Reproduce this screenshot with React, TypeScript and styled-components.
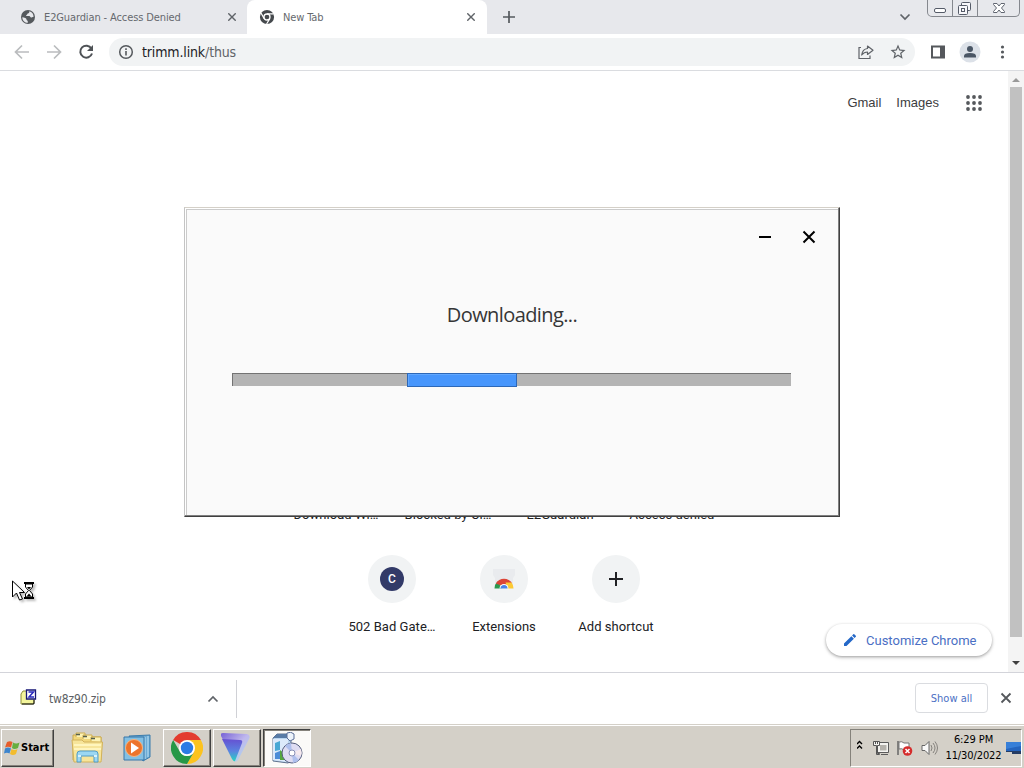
import React from 'react'
import styled, { createGlobalStyle, css } from 'styled-components'

const tahoma = `'DejaVu Sans Condensed', 'DejaVu Sans', sans-serif`

const GlobalStyle = createGlobalStyle`
  * {
    box-sizing: border-box;
  }

  body {
    margin: 0;
    overflow: hidden;
    background: #fff;
  }

  svg {
    display: block;
    flex-shrink: 0;
  }
`

const Screen = styled.div`
  position: relative;
  display: flex;
  flex-direction: column;
  width: 1024px;
  height: 768px;
  overflow: hidden;
  background: #fff;
  color: #202124;
  font-family: Roboto, sans-serif;
  font-size: 13px;
`

const Text = styled.span`
  white-space: nowrap;
`

/* ---------- browser frame ---------- */

const TabStrip = styled.div`
  display: flex;
  height: 34px;
  background: #e7e8ec;
`

const Tab = styled.div<{ $active?: boolean }>`
  display: flex;
  align-items: center;
  width: ${({ $active }) => ($active ? 240 : 247)}px;
  padding: 0 ${({ $active }) => ($active ? 12 : 11)}px 0 ${({ $active }) => ($active ? 12 : 20)}px;
  background: ${({ $active }) => ($active ? '#fff' : 'transparent')};
  border-radius: 8px 8px 0 0;
  color: #66696e;
  font-family: ${tahoma};
  font-size: 11px;
`

const TabTitle = styled(Text)`
  flex: 1;
  margin-left: 8px;
  letter-spacing: -0.12px;
`

const NewTabButton = styled.div`
  display: flex;
  align-items: center;
  padding-left: 16px;
  flex: 1;
`

const TabSearch = styled.div`
  display: flex;
  align-items: center;
  margin-right: 16px;
`

const WindowButtons = styled.div`
  display: flex;
  height: 17px;
  width: 93px;
  margin-right: 4px;
  border: 1px solid #85888e;
  border-top: none;
  border-radius: 0 0 5px 5px;
`

const WindowButton = styled.div<{ $width: number }>`
  display: flex;
  justify-content: center;
  width: ${({ $width }) => $width}px;

  & + & {
    border-left: 1px solid #85888e;
  }
`

const Toolbar = styled.div`
  display: flex;
  align-items: center;
  height: 37px;
  padding: 0 12px 0 13px;
  border-bottom: 1px solid #dadce0;
`

const NavButtons = styled.div`
  display: flex;
  gap: 14px;
  margin-right: 14px;
`

const Omnibox = styled.div`
  display: flex;
  align-items: center;
  width: 806px;
  height: 28px;
  padding: 0 8px 0 9px;
  border-radius: 14px;
  background: #f1f3f4;
`

const Address = styled(Text)`
  flex: 1;
  margin-left: 8px;
  font-family: ${tahoma};
  font-size: 14px;
  letter-spacing: -0.14px;
  color: #202124;

  span {
    color: #5f6368;
  }
`

const OmniboxActions = styled.div`
  display: flex;
  gap: 14px;
`

const ToolbarActions = styled.div`
  display: flex;
  align-items: center;
  justify-content: space-between;
  flex: 1;
  padding-left: 15px;
`

/* ---------- new tab page ---------- */

const Viewport = styled.div`
  display: flex;
  height: 601px;
`

const Page = styled.div`
  display: flex;
  flex-direction: column;
  flex: 1;
`

const PageLinks = styled.div`
  display: flex;
  flex-shrink: 0;
  align-items: center;
  justify-content: flex-end;
  height: 64px;
  padding-right: 26px;
  font-family: 'Liberation Sans', Arial, sans-serif;
  font-size: 13px;
  color: #3c3d40;

  svg {
    margin-left: 27px;
  }
`

const PageLink = styled(Text)`
  margin: -2px 0 0 15px;
`

const Shortcuts = styled.div`
  display: flex;
  flex-shrink: 0;
  flex-wrap: wrap;
  justify-content: center;
  row-gap: 14px;
  width: 448px;
  margin: 292px auto 0;
`

const Shortcut = styled.div`
  display: flex;
  flex-direction: column;
  align-items: center;
  width: 112px;
  height: 98px;
  padding-top: 16px;
`

const ShortcutIcon = styled.div`
  display: flex;
  align-items: center;
  justify-content: center;
  width: 48px;
  height: 48px;
  margin-bottom: 14px;
  border-radius: 50%;
  background: #f1f3f4;
`

const ShortcutLabel = styled(Text)`
  height: 20px;
  line-height: 20px;
  font-size: 13px;
  letter-spacing: 0.04px;
`

const Letter = styled.div`
  width: 24px;
  height: 24px;
  border-radius: 50%;
  background: #323a68;
  color: #fff;
  font: 500 12px/24px Roboto, sans-serif;
  text-align: center;
`

const CustomizeButton = styled.div`
  display: flex;
  flex-shrink: 0;
  align-items: center;
  align-self: flex-end;
  width: 166px;
  height: 32px;
  margin: -13px 16px 16px 0;
  padding-left: 16px;
  border-radius: 16px;
  box-shadow: 0 1px 3px rgba(0, 0, 0, 0.3), 0 2px 4px rgba(0, 0, 0, 0.1);
  color: #4a6fc4;

  svg {
    margin-right: 8px;
  }
`

const Scrollbar = styled.div`
  display: flex;
  flex-direction: column;
  align-items: center;
  width: 16px;
  background: #f4f4f4;
`

const ScrollThumb = styled.div`
  width: 12px;
  height: 550px;
  background: #c1c1c1;
`

/* ---------- download shelf ---------- */

const Shelf = styled.div`
  display: flex;
  align-items: center;
  height: 52px;
  padding: 0 12px 0 20px;
  border-top: 1px solid #d3d4da;
  font-family: ${tahoma};
`

const DownloadItem = styled.div`
  display: flex;
  align-items: center;
  justify-content: space-between;
  width: 217px;
  height: 38px;
  padding-right: 17px;
  border-right: 1px solid #d0d1d6;

  > svg:first-child {
    margin-top: -4px;
  }
`

const FileName = styled(Text)`
  flex: 1;
  margin-left: 12px;
  font-size: 12px;
  letter-spacing: -0.15px;
  color: #5c5f63;
`

const ShowAll = styled.div`
  width: 73px;
  height: 30px;
  margin: -1px 12px 0 auto;
  border: 1px solid #dadce0;
  border-radius: 4px;
  color: #4c70c4;
  font-size: 11px;
  line-height: 29px;
  text-align: center;
`

/* ---------- taskbar ---------- */

const Taskbar = styled.div`
  display: flex;
  align-items: center;
  height: 44px;
  padding: 3px 2px 1px 1px;
  border-top: 1px solid #d4d0c8;
  box-shadow: inset 0 1px #fff;
  background: #d4d0c8;
`

const raised = css`
  border: 1px solid;
  border-color: #fff #404040 #404040 #fff;
  box-shadow: inset -1px -1px #85827b;
`

const StartButton = styled.div`
  ${raised}
  display: flex;
  align-items: center;
  width: 53px;
  height: 38px;
  padding-left: 2px;
  color: #000;
  font: bold 11px ${tahoma};

  svg {
    margin-right: 1px;
  }
`

const QuickLaunch = styled.div`
  display: flex;
  align-items: center;
  gap: 19px;
  width: 109px;
  padding-left: 17px;
`

const TaskButton = styled.div<{ $pressed?: boolean }>`
  ${raised}
  display: flex;
  align-items: center;
  justify-content: center;
  width: 48px;
  height: 38px;
  margin-right: 2px;

  ${({ $pressed }) => $pressed && css`
    padding-right: 2px;
    background: #fbfaf8;
    border-color: #404040 #fff #fff #404040;
    box-shadow: inset 1px 1px #85827b;
  `}
`

const Tray = styled.div`
  display: flex;
  align-items: center;
  width: 172px;
  height: 38px;
  margin-left: auto;
  padding-left: 6px;
  border: 1px solid;
  border-color: #85827b #fff #fff #85827b;
`

const TrayIcons = styled.div`
  display: flex;
  align-items: center;
  gap: 6.500px;
  width: 84px;
`

const Clock = styled.div`
  width: 65px;
  color: #000;
  font: 11px/16px ${tahoma};
  letter-spacing: -0.1px;
  text-align: center;
  white-space: nowrap;
`

/* ---------- floating installer window ---------- */

const Installer = styled.div`
  position: absolute;
  left: 184px;
  top: 207px;
  display: flex;
  flex-direction: column;
  align-items: center;
  width: 656px;
  height: 310px;
  padding-right: 1px;
  background: #fafafa;
  border: 1px solid;
  border-color: #d4d0c8 #404040 #404040 #c4c4c4;
  box-shadow: inset -1px -1px #808080, inset 1px 1px #fff, inset 2px 2px #cbcbcb;
`

const InstallerButtons = styled.div`
  display: flex;
  align-self: flex-end;
  gap: 30px;
  margin: 22px 22px 0 0;
`

const InstallerStatus = styled.div`
  height: 30px;
  margin-top: 56px;
  padding-left: 1px;
  font: 20px/30px 'Open Sans', 'Noto Sans', sans-serif;
  letter-spacing: -0.6px;
  color: #363636;
  white-space: nowrap;
`

const ProgressTrack = styled.div`
  display: flex;
  align-self: flex-start;
  width: 559px;
  height: 13px;
  margin: 43px 0 0 47px;
  padding-left: 174px;
  background: #b4b4b4;
  border-top: 1px solid #737373;
  border-left: 1px solid #737373;
`

const ProgressChunk = styled.div`
  width: 110px;
  height: 14px;
  margin-top: -1px;
  background: #4796fc;
  border: 1px solid #2d68b8;
  box-shadow: inset 1px 1px #62a8ff;
`

const Cursor = styled.div`
  position: absolute;
  left: 12px;
  top: 580px;
  filter: drop-shadow(2px 2px 1px rgba(0, 0, 0, 0.25));
`

const CloseIcon = ({ size = 8, color = '#5f6368', weight = 1.4 }) => (
  <svg width={size} height={size} viewBox="0 0 8 8" stroke={color} strokeWidth={weight}>
    <path d="M.3.3l7.4 7.4M7.7.3L.3 7.7" />
  </svg>
)

const GlobeIcon = () => (
  <svg width="16" height="16" viewBox="0 0 16 16">
    <circle cx="8" cy="8" r="7" fill="#55595d" />
    <path d="M2.3 8.2c2 .2 4.200.8 4.200 2.200 0 1 1.300.9 1.300 2v1.400C4.800 13.800 2.300 11.600 2.300 8.200zM9.200 2.300c.4 1.500-.3 2-1.400 2.200-.7.2-.3 1.200-1.200 1.400-.8.2-.6 1 .1 1.100h2.500c1.200 0 .9 1.400 2 1.400.9 0 1.200-.6 2.300-.5C13.800 5.200 12 2.900 9.200 2.300z" fill="#e7e8ec" />
  </svg>
)

const ChromeMonoIcon = () => (
  <svg width="16" height="16" viewBox="0 0 16 16" fill="none">
    <circle cx="8" cy="8" r="5.100" stroke="#45494d" strokeWidth="4" />
    <circle cx="8" cy="8" r="3" fill="#45494d" stroke="#fff" strokeWidth="1.300" />
    <path d="M8 4.800h6.600M5.200 9.600L2 4M10.800 9.600L7.600 15" stroke="#fff" strokeWidth="1.200" />
  </svg>
)

const ChromeIcon = () => (
  <svg width="32" height="32" viewBox="0 0 32 32">
    <path d="M16 16L2.140 8A16 16 0 0 1 29.860 8z" fill="#e33b2e" />
    <path d="M16 8h13.860A16 16 0 0 1 16 32l6.930-12z" fill="#fcc31e" />
    <path d="M2.140 8L9.070 20A8 8 0 0 0 22.930 20L16 32A16 16 0 0 1 2.140 8z" fill="#279847" />
    <circle cx="16" cy="16" r="8" fill="#fff" />
    <circle cx="16" cy="16" r="6.200" fill="#2c7be5" />
  </svg>
)

const ExtensionsIcon = () => (
  <svg width="24" height="24" viewBox="0 0 24 24">
    <path d="M1 2h22v6l-2 3v9H3v-9L1 8z" fill="#e9ebee" />
    <path d="M2.500 21.500a9.500 9.500 0 0 1 3-7l4 5v2z" fill="#2c9950" />
    <path d="M3.800 16.500a9.500 9.500 0 0 1 16.400 0l-6 2h-5z" fill="#dc4437" />
    <path d="M21.500 21.500a9.500 9.500 0 0 0-2-6h-6l2 6z" fill="#fcc934" />
    <path d="M7.500 21.500a4.500 4.500 0 0 1 9 0z" fill="#fff" />
    <path d="M8.500 21.500a3.500 3.500 0 0 1 7 0z" fill="#4a82e8" />
  </svg>
)

const FolderIcon = () => (
  <svg width="33" height="32" viewBox="0 0 33 32">
    <path d="M2 6V3h8l2 2h18v23H2z" fill="#f2d87c" stroke="#c9a84c" />
    <path d="M5 5V1h9v4M12 7V3h9v4M20 9V5h10v5" fill="#fdf3b5" stroke="#cfae50" />
    <path d="M5 2.500h4M12 4.500h4M20 6.500h4" stroke="#555f4d" strokeWidth="1.500" />
    <path d="M1 8h10l2 2h18.500L30 30H3z" fill="#f7e59a" stroke="#d2b25a" />
    <path d="M3 13h27M3 17h27" stroke="#fff5bd" strokeWidth="2" />
    <path d="M6 30V22q0-3 3-3h15q3 0 3 3v8h-4v-6H10v6z" fill="#9bd7f2" stroke="#529cc6" />
    <path d="M7 24h3M23 24h3" stroke="#d9f2fc" strokeWidth="2" />
  </svg>
)

const MediaIcon = () => (
  <svg width="28" height="28" viewBox="0 0 28 28">
    <path d="M6 2l21-1v22l-7 4z" fill="#6eacd5" stroke="#3b7cac" />
    <path d="M22 3v22M25 2v21" stroke="#bce0f4" />
    <path d="M1 3h20v23H1z" fill="#83c0e3" stroke="#3977a9" />
    <circle cx="11" cy="14" r="8.500" fill="#ed742b" stroke="#f6b481" />
    <path d="M8 8.500v11l8-5.500z" fill="#fff" />
  </svg>
)

const VpnIcon = () => (
  <svg width="32" height="32" viewBox="0 0 32 32">
    <defs>
      <linearGradient id="vpn" x1="0" y1="0" x2="0" y2="1">
        <stop offset="0" stopColor="#6650d2" />
        <stop offset=".55" stopColor="#5a83e0" />
        <stop offset="1" stopColor="#24d5c1" />
      </linearGradient>
      <linearGradient id="vpnEdge" x1="0" y1="0" x2="1" y2="1">
        <stop offset="0" stopColor="#7661d6" />
        <stop offset=".5" stopColor="#c0b8ed" />
        <stop offset="1" stopColor="#a5dfec" />
      </linearGradient>
    </defs>
    <path d="M0 4q-1-3 2-3l24 1q4 1 2 5L17 28q-3 4-5-1z" fill="url(#vpnEdge)" />
    <path d="M1 7l18 1q3 0 2 3l-7 18q-1 1-3-2z" fill="url(#vpn)" />
  </svg>
)

const InstallerIcon = () => (
  <svg width="33" height="32" viewBox="0 0 33 32">
    <path d="M3 6L7 2h16l-2 5v22l-3 2L3 29z" fill="#b9d5ef" stroke="#61738f" />
    <path d="M3 6h16l3-4H7z" fill="#587ba6" />
    <path d="M17 1q4-2 7 1v5l-4 2-3-3z" fill="#edf3fb" stroke="#5b6e98" />
    <path d="M3 7h15v23L3 28z" fill="#dceafb" />
    <path d="M5 11l5-2v9l-5 1z" fill="#48a8d4" />
    <path d="M5 21l5-2v8H5z" fill="#4c8cd7" />
    <path d="M10 18l5 4v6h-5z" fill="#54a83d" />
    <circle cx="22" cy="21" r="10" fill="#dedcf2" stroke="#555f7e" />
    <path d="M22 21L15 14a10 10 0 0 1 6-3zM22 21l7 7a10 10 0 0 1-6 3z" fill="#aebfed" />
    <path d="M22 21l9-4a10 10 0 0 1 0 7z" fill="#f5e9ee" />
    <circle cx="22" cy="21" r="3" fill="#fff" stroke="#888fb6" />
  </svg>
)

const WindowsIcon = () => (
  <svg width="16" height="16" viewBox="0 0 16 16">
    <path d="M3 2q3-1.500 5.500 0L7 7.500Q4 6 1 7.500z" fill="#e65d2b" />
    <path d="M9 2.500q3 2 6.500 0L14 8q-4 2-6 0z" fill="#67ae3e" />
    <path d="M1 8.500q3-2 6 0l-1.500 5Q3 12 0 13.500z" fill="#3d85cd" />
    <path d="M7.500 9q3 2 6 0L12 14q-3 2-6 0z" fill="#f2bc2e" />
  </svg>
)

const ZipIcon = () => (
  <svg width="17" height="16" viewBox="0 0 17 16">
    <path d="M1 5l2-3h5v2h6v10l-1 1H1z" fill="#f3f59b" stroke="#8c8d3d" />
    <path d="M2 15h12v-4" fill="none" stroke="#111" />
    <path d="M6.500 1h9v9h-9z" fill="#fff" stroke="#171775" strokeWidth="1.300" />
    <path d="M8.500 3h5L9 8h5" fill="none" stroke="#2929bc" strokeWidth="1.500" />
  </svg>
)

const shortcuts: { label: string; icon?: React.ReactNode }[] = [
  { label: 'Download Wi…' },
  { label: 'Blocked by Cl…' },
  { label: 'E2Guardian' },
  { label: 'Access denied' },
  { label: '502 Bad Gate…', icon: <Letter>C</Letter> },
  { label: 'Extensions', icon: <ExtensionsIcon /> },
  {
    label: 'Add shortcut',
    icon: (
      <svg width="14" height="14" viewBox="0 0 14 14" stroke="#202124" strokeWidth="2">
        <path d="M7 0v14M0 7h14" />
      </svg>
    ),
  },
]

const BrowserTabs = () => (
  <TabStrip>
    <Tab>
      <GlobeIcon />
      <TabTitle>E2Guardian - Access Denied</TabTitle>
      <CloseIcon />
    </Tab>
    <Tab $active>
      <ChromeMonoIcon />
      <TabTitle>New Tab</TabTitle>
      <CloseIcon />
    </Tab>
    <NewTabButton>
      <svg width="12" height="12" viewBox="0 0 12 12" stroke="#55595d" strokeWidth="1.700">
        <path d="M6 0v12M0 6h12" />
      </svg>
    </NewTabButton>
    <TabSearch>
      <svg width="12" height="8" viewBox="0 0 12 8" fill="none" stroke="#5f6368" strokeWidth="1.700">
        <path d="M1.500 1.500L6 6l4.500-4.500" />
      </svg>
    </TabSearch>
    <WindowButtons>
      <WindowButton $width={24}>
        <svg width="24" height="16" viewBox="0 0 24 16">
          <rect x="6.500" y="8.500" width="11" height="4" rx="1.500" fill="#fff" stroke="#555b68" />
        </svg>
      </WindowButton>
      <WindowButton $width={25}>
        <svg width="24" height="16" viewBox="0 0 24 16" fill="#f7f7fa" stroke="#555b68">
          <rect x="8.500" y="2.500" width="9" height="8" rx="1" />
          <rect x="5.500" y="5.500" width="9" height="9" rx="1" />
          <rect x="8.500" y="8.500" width="3" height="3" />
        </svg>
      </WindowButton>
      <WindowButton $width={42}>
        <svg width="24" height="16" viewBox="0 0 24 16">
          <path d="M6.500 3.500h3.500l2 2.500 2-2.500h3.500v1L14.500 8l3 3.500v1H14L12 10l-2 2.500H6.500v-1l3-3.500-3-3.500z" fill="#fff" stroke="#606570" />
        </svg>
      </WindowButton>
    </WindowButtons>
  </TabStrip>
)

const BrowserToolbar = () => (
  <Toolbar>
    <NavButtons>
      <svg width="18" height="18" viewBox="0 0 18 18" fill="none" stroke="#babcbe" strokeWidth="1.700">
        <path d="M16 9H3M9 2.500L2.500 9 9 15.500" />
      </svg>
      <svg width="18" height="18" viewBox="0 0 18 18" fill="none" stroke="#babcbe" strokeWidth="1.700">
        <path d="M2 9h13M9 2.500L15.500 9 9 15.500" />
      </svg>
      <svg width="18" height="18" viewBox="0 0 18 18" fill="none" stroke="#4e5256" strokeWidth="2">
        <path d="M14.400 5.500A6 6 0 1 0 15 10.500" />
        <path d="M16 2v6h-6z" fill="#4e5256" stroke="none" />
      </svg>
    </NavButtons>
    <Omnibox>
      <svg width="16" height="16" viewBox="0 0 16 16" fill="none" stroke="#55595d" strokeWidth="1.500">
        <circle cx="8" cy="8" r="6.300" />
        <path d="M8 7v4.500M8 4.300v1.600" strokeWidth="1.600" />
      </svg>
      <Address>trimm.link<span>/thus</span></Address>
      <OmniboxActions>
        <svg width="18" height="18" viewBox="0 0 18 18" fill="none" stroke="#5f6368" strokeWidth="1.200">
          <path d="M4 4.500H2v11h11v-3" />
          <path d="M10.500 3l5.500 4.200-5.500 4.200V9Q7 9 4.700 12 5.500 6 10.500 5.500z" strokeLinejoin="round" />
        </svg>
        <svg width="18" height="18" viewBox="0 0 24 24" fill="#5f6368">
          <path d="M22 9.240l-7.190-.62L12 2 9.190 8.630 2 9.240l5.460 4.730L5.820 21 12 17.270 18.180 21l-1.630-7.030L22 9.240zM12 15.400l-3.760 2.270 1-4.280-3.320-2.880 4.380-.38L12 6.100l1.710 4.040 4.380.38-3.320 2.880 1 4.280L12 15.400z" />
        </svg>
      </OmniboxActions>
    </Omnibox>
    <ToolbarActions>
      <svg width="16" height="16" viewBox="0 0 16 16">
        <path d="M1 1.500h14v13H1zM3 3.500v9h7v-9z" fill="#55585c" fillRule="evenodd" />
      </svg>
      <svg width="22" height="22" viewBox="0 0 22 22">
        <circle cx="11" cy="11" r="10.500" fill="#dce1e8" />
        <circle cx="11" cy="8" r="3" fill="#4a5665" />
        <path d="M5 16.500v-1.500q0-3 6-3t6 3v1.500z" fill="#4a5665" />
      </svg>
      <svg width="19" height="16" viewBox="0 0 19 16" fill="#55595d">
        <circle cx="9.500" cy="3" r="1.600" />
        <circle cx="9.500" cy="8" r="1.600" />
        <circle cx="9.500" cy="13" r="1.600" />
      </svg>
    </ToolbarActions>
  </Toolbar>
)

const NewTabPage = () => (
  <Viewport>
    <Page>
      <PageLinks>
        <PageLink>Gmail</PageLink>
        <PageLink>Images</PageLink>
        <svg width="16" height="16" viewBox="0 0 16 16" fill="#55585c">
          {[2, 8, 14].map(y => [2, 8, 14].map(x => (
            <circle key={`${x}-${y}`} cx={x} cy={y} r="1.900" />
          )))}
        </svg>
      </PageLinks>
      <Shortcuts>
        {shortcuts.map(({ label, icon }) => (
          <Shortcut key={label}>
            <ShortcutIcon>{icon}</ShortcutIcon>
            <ShortcutLabel>{label}</ShortcutLabel>
          </Shortcut>
        ))}
      </Shortcuts>
      <CustomizeButton>
        <svg width="16" height="16" viewBox="0 0 24 24" fill="#2468c8">
          <path d="M3 17.250V21h3.750L17.810 9.940l-3.750-3.750L3 17.250zM20.710 7.040a1 1 0 0 0 0-1.410l-2.340-2.340a1 1 0 0 0-1.410 0l-1.830 1.830 3.750 3.750 1.830-1.830z" />
        </svg>
        <Text>Customize Chrome</Text>
      </CustomizeButton>
    </Page>
    <Scrollbar>
      <svg width="16" height="16" viewBox="0 0 16 16">
        <path d="M4 11h8L8 7z" fill="#999" />
      </svg>
      <ScrollThumb />
      <svg width="16" height="35" viewBox="0 0 16 35">
        <path d="M4 24h8l-4 4z" fill="#404040" />
      </svg>
    </Scrollbar>
  </Viewport>
)

const DownloadShelf = () => (
  <Shelf>
    <DownloadItem>
      <ZipIcon />
      <FileName>tw8z90.zip</FileName>
      <svg width="12" height="8" viewBox="0 0 12 8" fill="none" stroke="#5f6368" strokeWidth="1.700">
        <path d="M1.500 6.500L6 2l4.500 4.500" />
      </svg>
    </DownloadItem>
    <ShowAll>Show all</ShowAll>
    <svg width="12" height="14" viewBox="0 0 12 14" stroke="#55585c" strokeWidth="1.800">
      <path d="M1.500 1.500l9 9M10.500 1.500l-9 9" />
    </svg>
  </Shelf>
)

const SystemTaskbar = () => (
  <Taskbar>
    <StartButton>
      <WindowsIcon />
      Start
    </StartButton>
    <QuickLaunch>
      <FolderIcon />
      <MediaIcon />
    </QuickLaunch>
    <TaskButton><ChromeIcon /></TaskButton>
    <TaskButton><VpnIcon /></TaskButton>
    <TaskButton $pressed><InstallerIcon /></TaskButton>
    <Tray>
      <TrayIcons>
        <svg width="9" height="18" viewBox="0 0 9 18" fill="none" stroke="#000" strokeWidth="1.400">
          <path d="M0 5l2.500-2.500L5 5M0 9.500L2.500 7 5 9.500" />
        </svg>
        <svg width="17" height="16" viewBox="0 0 17 16">
          <path d="M4.500 2.500h11v10h-11z" fill="#f4f3f0" stroke="#5b5b5b" />
          <path d="M7 5h6.500v5.500H7z" fill="#b5b2ac" />
          <path d="M8 14.500h7" stroke="#5b5b5b" />
          <path d="M.500 1.500h6v4h-2v8h2v1h-3v-9h-3z" fill="#f4f3f0" stroke="#555" />
          <path d="M2.500 1v3M4.500 1v3" stroke="#555" />
        </svg>
        <svg width="18" height="16" viewBox="0 0 18 16">
          <path d="M2 1v14" stroke="#666" strokeWidth="1.500" />
          <path d="M3 2q3-1 5 1h5v7H8Q6 8 3 9z" fill="#fff" stroke="#777" />
          <circle cx="11.500" cy="11" r="4.800" fill="#d52c2c" />
          <path d="M9.500 9l4 4M13.500 9l-4 4" stroke="#fff" strokeWidth="1.500" />
        </svg>
        <svg width="17" height="16" viewBox="0 0 17 16" fill="none" stroke="#85827d">
          <path d="M1 5.500h3l4-4v13l-4-4H1z" fill="#fafafa" stroke="#666" />
          <path d="M10 5q2 3 0 6M12 3q4 5 0 10M14 1.500q5 6.500 0 13" />
        </svg>
      </TrayIcons>
      <Clock>
        <div>6:29 PM</div>
        <div>11/30/2022</div>
      </Clock>
      <svg width="15" height="16" viewBox="0 0 15 16">
        <path d="M0 2h15v9H0z" fill="#2464be" />
        <path d="M0 2h15v4L0 9z" fill="#377fd8" />
        <path d="M0 11h15v1H0zM6 12h9v2H6z" fill="#243c64" />
      </svg>
    </Tray>
  </Taskbar>
)

export default function App() {
  return (
    <>
      <GlobalStyle />
      <Screen>
        <BrowserTabs />
        <BrowserToolbar />
        <NewTabPage />
        <DownloadShelf />
        <SystemTaskbar />

        <Installer>
          <InstallerButtons>
            <svg width="14" height="14" viewBox="0 0 14 14">
              <path d="M1 7h12" stroke="#000" strokeWidth="2" />
            </svg>
            <svg width="14" height="14" viewBox="0 0 14 14">
              <path d="M1.500 1.500l11 11M12.500 1.500l-11 11" stroke="#000" strokeWidth="2" />
            </svg>
          </InstallerButtons>
          <InstallerStatus>Downloading...</InstallerStatus>
          <ProgressTrack>
            <ProgressChunk />
          </ProgressTrack>
        </Installer>

        <Cursor>
          <svg width="24" height="22" viewBox="0 0 24 22">
            <path d="M.5 1v16l4-4 3 7 3-1-3-6.500h5z" fill="#fff" stroke="#000" />
            <path d="M12 3h10M12 18h10" stroke="#000" strokeWidth="2" />
            <path d="M13.500 4v3l3 3.500-3 3.500v3h7v-3l-3-3.500 3-3.500V4z" fill="#fff" stroke="#000" />
            <path d="M15 7h4l-2 2.500zM14.500 16.500L17 13.500l2.500 3z" fill="#000" />
          </svg>
        </Cursor>
      </Screen>
    </>
  )
}
